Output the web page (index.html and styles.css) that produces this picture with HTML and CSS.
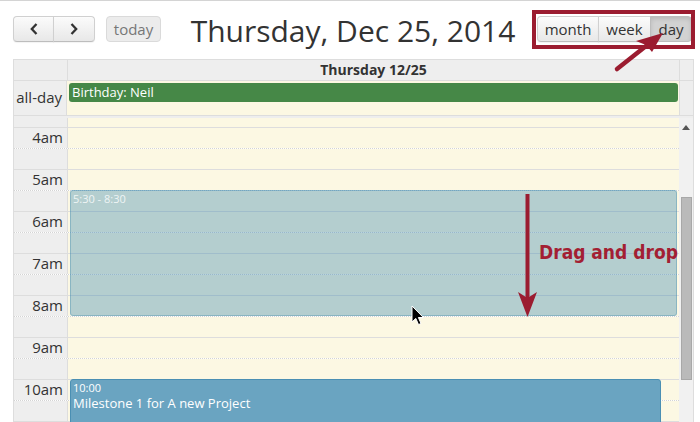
FILE: index.html
```html
<!DOCTYPE html>
<html>
<head>
<meta charset="utf-8">
<link rel="stylesheet" href="styles.css">
</head>
<body>
<div class="toolbar">
  <div class="tb-left">
    <div class="btn-group">
      <button class="btn btn-prev"><svg width="8" height="12" viewBox="0 0 8 12"><polyline points="6.5,1 1.8,6 6.5,11" fill="none" stroke="#333" stroke-width="2.3"/></svg></button>
      <button class="btn btn-next"><svg width="8" height="12" viewBox="0 0 8 12"><polyline points="1.5,1 6.2,6 1.5,11" fill="none" stroke="#333" stroke-width="2.3"/></svg></button>
    </div>
    <button class="btn btn-today" disabled>today</button>
  </div>
  <h2 class="title">Thursday, Dec 25, 2014</h2>
  <div class="btn-group">
    <button class="btn btn-month">month</button>
    <button class="btn btn-week">week</button>
    <button class="btn btn-day active">day</button>
  </div>
</div>

<div class="view">
  <div class="head-row">
    <div class="axis"></div>
    <div class="day-head">Thursday 12/25</div>
    <div class="gutter"></div>
  </div>
  <div class="allday-row">
    <div class="axis allday-label">all-day</div>
    <div class="allday-cell"><div class="allday-event">Birthday: Neil</div></div>
    <div class="gutter"></div>
  </div>
  <div class="divider"></div>
  <div class="time-area">
    <div class="time-grid">
      <div class="slot first"><div class="lbl"></div><div class="cell"></div></div>
      <div class="slot"><div class="lbl">4am</div><div class="cell"></div></div>
      <div class="slot half"><div class="lbl"></div><div class="cell"></div></div>
      <div class="slot"><div class="lbl">5am</div><div class="cell"></div></div>
      <div class="slot half"><div class="lbl"></div><div class="cell"></div></div>
      <div class="slot"><div class="lbl">6am</div><div class="cell"></div></div>
      <div class="slot half"><div class="lbl"></div><div class="cell"></div></div>
      <div class="slot"><div class="lbl">7am</div><div class="cell"></div></div>
      <div class="slot half"><div class="lbl"></div><div class="cell"></div></div>
      <div class="slot"><div class="lbl">8am</div><div class="cell"></div></div>
      <div class="slot half"><div class="lbl"></div><div class="cell"></div></div>
      <div class="slot"><div class="lbl">9am</div><div class="cell"></div></div>
      <div class="slot half"><div class="lbl"></div><div class="cell"></div></div>
      <div class="slot"><div class="lbl">10am</div><div class="cell"></div></div>
      <div class="slot half"><div class="lbl"></div><div class="cell"></div></div>
      <div class="slot"><div class="lbl"></div><div class="cell"></div></div>

      <div class="event event-drag"><div class="ev-time">5:30 - 8:30</div></div>
      <div class="event event-milestone"><div class="ev-time">10:00</div><div class="ev-title">Milestone 1 for A new Project</div></div>
    </div>
    <div class="scrollbar">
      <div class="sb-up"></div>
      <div class="sb-thumb"></div>
    </div>
  </div>
</div>

<div class="highlight-box"></div>
<div class="drag-label">Drag and drop</div>
<svg class="overlay" width="700" height="422" viewBox="0 0 700 422">
  <line x1="617" y1="68" x2="646" y2="45" stroke="#9b1c30" stroke-width="4.5" stroke-linecap="round"/>
  <polygon points="663,32 652,51 646,44 636,40" fill="#9b1c30"/>
  <line x1="527.5" y1="193" x2="527.5" y2="300" stroke="#9b1c30" stroke-width="4"/>
  <polygon points="518,291 527.5,297 537,291 527.5,316" fill="#9b1c30"/>
</svg>
<svg class="cursor" width="14" height="22" viewBox="0 0 14 22">
  <path d="M1 1 L1 17 L4.8 13.4 L7.5 19.6 L10 18.5 L7.4 12.5 L12.4 12.5 Z" fill="#000" stroke="#fff" stroke-width="1"/>
</svg>
</body>
</html>
```

FILE: styles.css
```css
html, body {
  margin: 0;
  padding: 0;
}
body {
  width: 700px;
  height: 421px;
  overflow: hidden;
  position: relative;
  background: #fff;
  border-top: 1px solid #d4d4d4;
  font-family: "Open Sans", "Liberation Sans", sans-serif;
  color: #333;
}

/* toolbar */
.toolbar {
  display: flex;
  align-items: center;
  justify-content: space-between;
  height: 26px;
  padding: 15px 8px 0 13px;
  margin-bottom: 17px;
}
.tb-left {
  display: flex;
  align-items: center;
}
.btn-group {
  display: flex;
}
.btn {
  box-sizing: border-box;
  height: 26px;
  margin: 0;
  padding: 0;
  font-family: "Open Sans", sans-serif;
  font-size: 15px;
  color: #333;
  background: linear-gradient(#fbfbfb, #e8e8e8);
  border: 1px solid #d0d0d0;
  border-bottom-color: #bdbdbd;
  border-radius: 4px;
  box-shadow: inset 0 1px 0 rgba(255,255,255,.3), 0 1px 1px rgba(0,0,0,.05);
  display: flex;
  align-items: center;
  justify-content: center;
}
.btn-group .btn { border-radius: 0; }
.btn-group .btn:first-child { border-radius: 4px 0 0 4px; }
.btn-group .btn:last-child { border-radius: 0 4px 4px 0; margin-left: -1px; }
.btn-prev { width: 41px; }
.btn-next { width: 42px; }
.btn-today {
  width: 55px;
  margin-left: 11px;
  color: #777;
  background: #ececec;
  border-color: #dadada;
  box-shadow: none;
}
.btn-month { width: 62px; }
.btn-week { width: 53px; margin-left: -1px; }
.btn-day { width: 42px; }
.btn.active {
  background: #d2d2d2;
  border-color: #bdbdbd;
  box-shadow: inset 0 2px 4px rgba(0,0,0,.12);
}
.title {
  margin: 4px 0 0 8px;
  font-size: 30px;
  font-weight: 400;
  line-height: 26px;
  color: #333;
  white-space: nowrap;
}

/* view */
.view {
  margin-left: 13px;
  width: 681px;
  box-sizing: border-box;
  border: 1px solid #ddd;
  border-bottom: none;
}
.head-row {
  display: flex;
  height: 20px;
  border-bottom: 1px solid #ddd;
}
.axis {
  width: 53px;
  border-right: 1px solid #ddd;
  background: #eee;
}
.day-head {
  flex: 1;
  background: #eee;
  text-align: center;
  font-weight: bold;
  font-size: 14px;
  line-height: 20px;
}
.gutter {
  width: 13px;
  border-left: 1px solid #ddd;
  background: #eee;
}
.allday-row {
  display: flex;
  height: 34px;
  border-bottom: 1px solid #ddd;
}
.allday-label {
  box-sizing: border-box;
  text-align: right;
  padding-right: 4px;
  font-size: 15px;
  line-height: 33px;
}
.allday-cell {
  flex: 1;
  background: #fcf8e3;
  padding: 2px 1px 0 2px;
}
.allday-event {
  height: 19px;
  background: #468847;
  border-radius: 3px;
  color: #fff;
  font-size: 13px;
  line-height: 18px;
  padding-left: 3px;
}
.divider {
  height: 2px;
  background: #eee;
}

/* time grid */
.time-area {
  display: flex;
  height: 304px;
  overflow: hidden;
}
.time-grid {
  flex: 1;
  position: relative;
}
.slot {
  display: flex;
  height: 20px;
  border-top: 1px solid #ddd;
}
.slot.half {
  border-top: 1px dotted #d4d4d4;
}
.slot.first {
  height: 9px;
  border-top: none;
}
.lbl {
  box-sizing: border-box;
  width: 54px;
  border-right: 1px solid #ddd;
  background: #eee;
  text-align: right;
  padding-right: 4px;
  font-size: 15px;
  line-height: 18px;
  white-space: nowrap;
}
.cell {
  flex: 1;
  background: #fcf8e3;
}
.event {
  position: absolute;
  box-sizing: border-box;
  border-radius: 3px;
  color: #fff;
  padding-left: 2px;
}
.event-drag {
  left: 56px;
  right: 2px;
  top: 72px;
  height: 126px;
  background: rgba(58, 135, 173, .37);
  border: 1px solid rgba(58, 135, 173, .35);
}
.event-drag .ev-time {
  color: rgba(255,255,255,.8);
}
.event-milestone {
  left: 56px;
  right: 18px;
  top: 261px;
  height: 100px;
  background: #6aa4c1;
  border: 1px solid #4a8fb3;
}
.ev-time {
  font-size: 11px;
  line-height: 14px;
  padding-top: 1px;
}
.ev-title {
  font-size: 13px;
  line-height: 16px;
}
.scrollbar {
  width: 14px;
  background: #f1f1f1;
  position: relative;
}
.sb-up {
  position: absolute;
  left: 3px;
  top: 7px;
  width: 0;
  height: 0;
  border-left: 4px solid transparent;
  border-right: 4px solid transparent;
  border-bottom: 5px solid #555;
}
.sb-thumb {
  position: absolute;
  left: 2px;
  top: 79px;
  width: 11px;
  height: 183px;
  box-sizing: border-box;
  background: #bababa;
  border: 1px solid #a8a8a8;
}

/* annotations */
.highlight-box {
  position: absolute;
  left: 532px;
  top: 9px;
  width: 163px;
  height: 39px;
  box-sizing: border-box;
  border: 4px solid #9b1c30;
}
.overlay {
  position: absolute;
  left: 0;
  top: 0;
  pointer-events: none;
}
.drag-label {
  position: absolute;
  left: 539px;
  top: 238px;
  font-family: "DejaVu Sans Condensed", "DejaVu Sans", sans-serif;
  font-weight: bold;
  font-size: 19px;
  line-height: 26px;
  color: #a31f33;
  white-space: nowrap;
}
.cursor {
  position: absolute;
  left: 411px;
  top: 304px;
}
```
